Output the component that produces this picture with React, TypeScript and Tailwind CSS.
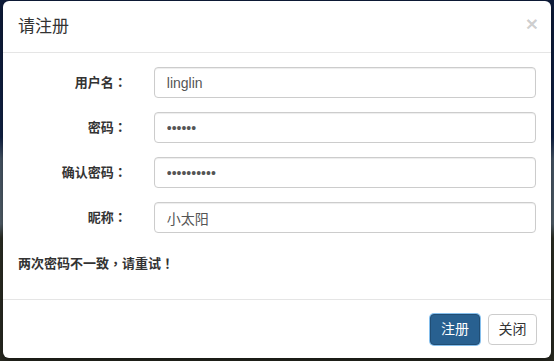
import React from 'react';

const FIELDS = [
  { label: '用户名', type: 'text', value: 'linglin' },
  { label: '密码', type: 'password', value: '123456' },
  { label: '确认密码', type: 'password', value: '1234567890' },
  { label: '昵称', type: 'text', value: '小太阳' },
];

const FONT = "font-['Liberation_Sans','Noto_Sans_CJK_SC',sans-serif]";
// full-width punctuation sits centred in the reference font
const PUNCT = "font-['Noto_Sans_CJK_TC',sans-serif]";

export default function App() {
  return (
    <div
      className={`h-[361px] w-[554px] overflow-hidden bg-[linear-gradient(180deg,#0e1c3b_0%,#12244a_38%,#4a5a6b_44%,#56646f_62%,#2e3026_66%,#2a2b22_100%)] pl-[3px] pt-[1px] [text-spacing-trim:space-all] ${FONT}`}
    >
      <div className="flex h-[357px] w-[548px] flex-col rounded-md bg-white text-[#333] shadow-[0_3px_9px_rgba(0,0,0,0.5)]">
        <div className="flex h-[52px] items-center justify-between border-b border-[#e5e5e5] px-[15px]">
          <h4 className="text-[17px] leading-none">请注册</h4>
          <button className="-mr-[2px] pb-[6px] text-[21px] font-bold leading-none text-black/20">×</button>
        </div>

        <div className="flex flex-1 flex-col px-[15px] pt-[14px]">
          <div className="flex flex-col gap-[14px]">
            {FIELDS.map((field) => (
              <div key={field.label} className="flex items-center">
                <label className="w-[109px] text-right text-[13px] font-bold">
                  {field.label}
                  <span className={PUNCT}>：</span>
                </label>
                <input
                  type={field.type}
                  defaultValue={field.value}
                  readOnly
                  className="ml-[27px] h-[31px] w-[383px] rounded border border-[#ccc] px-[12px] text-[14px] text-[#555] shadow-[inset_0_1px_1px_rgba(0,0,0,0.075)] outline-none"
                />
              </div>
            ))}
          </div>
          <p className="mt-[20px] text-[13px] font-bold">
            两次密码不一致<span className={PUNCT}>，</span>请重试<span className={PUNCT}>！</span>
          </p>
        </div>

        <div className="flex h-[59px] items-start justify-end gap-[8px] border-t border-[#e5e5e5] px-[14px] pt-[14px]">
          <button className="h-[31px] w-[50px] rounded border border-[#204d74] bg-[#286090] text-[14px] text-white shadow-[0_0_0_1px_rgba(102,175,233,0.8)]">
            注册
          </button>
          <button className="h-[31px] w-[49px] rounded border border-[#ccc] bg-white text-[14px] text-[#333]">
            关闭
          </button>
        </div>
      </div>
    </div>
  );
}
